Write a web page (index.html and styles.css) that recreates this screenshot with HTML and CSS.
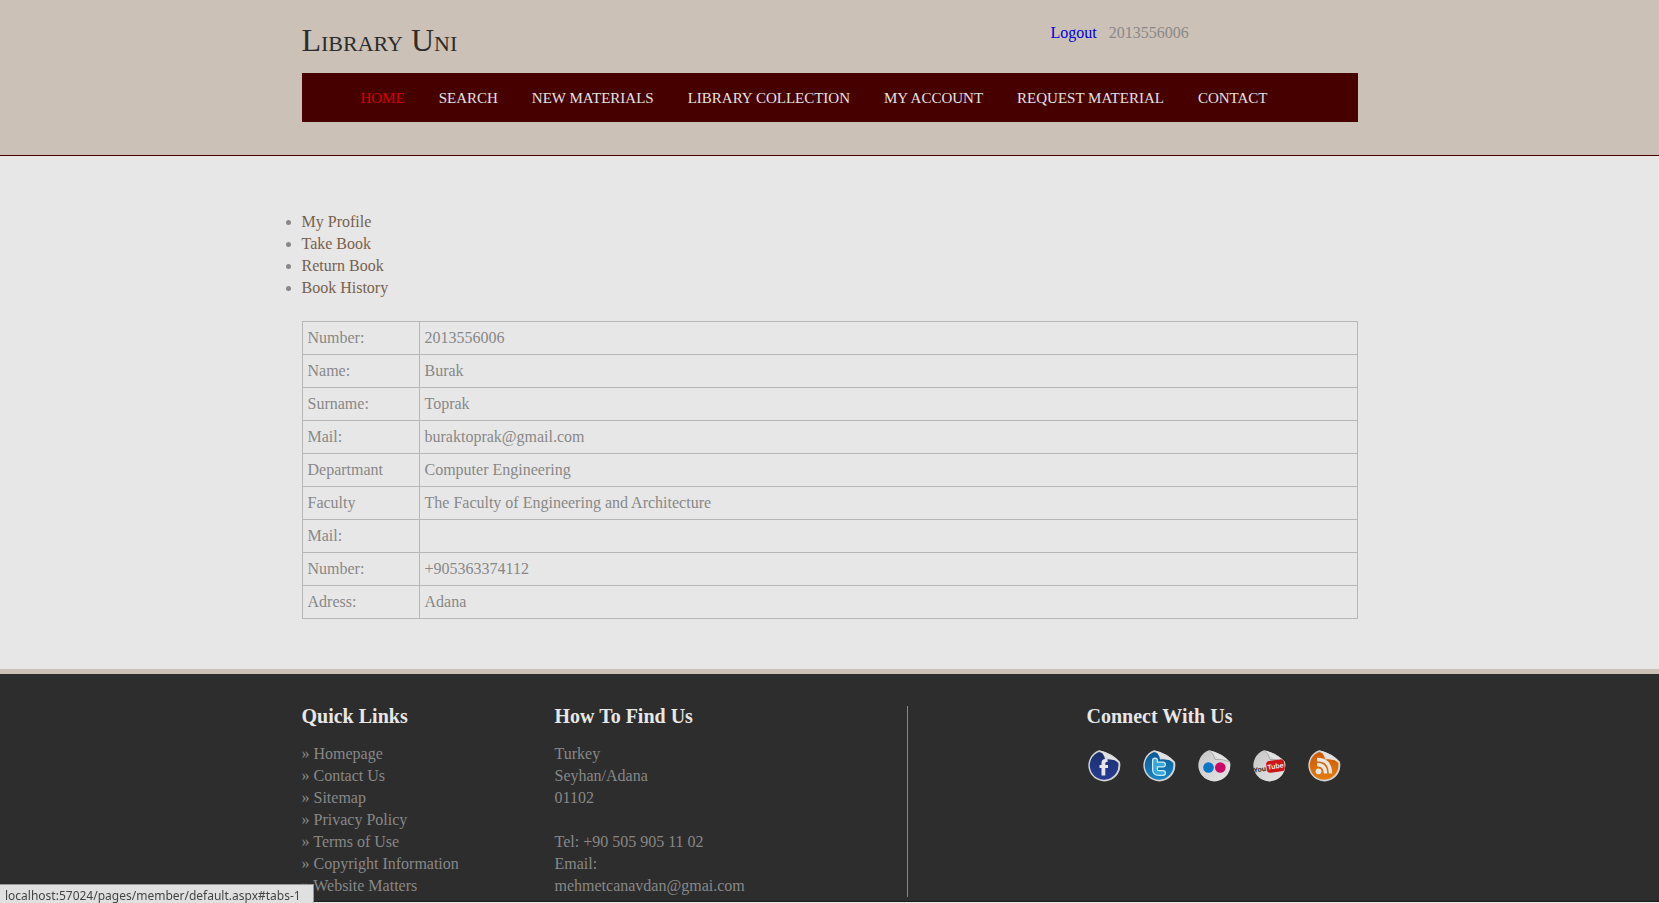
FILE: index.html
```html
<!DOCTYPE html>
<html lang="en">
<head>
<meta charset="utf-8">
<meta name="viewport" content="width=device-width, initial-scale=1">
<title>Library Uni</title>
<link rel="stylesheet" href="styles.css">
</head>
<body>
<header class="site-header">
  <div class="wrap">
    <div class="masthead">
      <h1 class="logo">Library Uni</h1>
      <div class="session"><a href="#logout">Logout</a><span>2013556006</span></div>
    </div>
    <nav class="main-nav">
      <a class="active" href="#home">HOME</a>
      <a href="#search">SEARCH</a>
      <a href="#new">NEW MATERIALS</a>
      <a href="#collection">LIBRARY COLLECTION</a>
      <a href="#account">MY ACCOUNT</a>
      <a href="#request">REQUEST MATERIAL</a>
      <a href="#contact">CONTACT</a>
    </nav>
  </div>
</header>

<main class="wrap content">
  <ul class="tabs">
    <li><a href="#tabs-1">My Profile</a></li>
    <li><a href="#tabs-2">Take Book</a></li>
    <li><a href="#tabs-3">Return Book</a></li>
    <li><a href="#tabs-4">Book History</a></li>
  </ul>
  <table class="profile">
    <tbody>
      <tr><th scope="row">Number:</th><td>2013556006</td></tr>
      <tr><th scope="row">Name:</th><td>Burak</td></tr>
      <tr><th scope="row">Surname:</th><td>Toprak</td></tr>
      <tr><th scope="row">Mail:</th><td>buraktoprak@gmail.com</td></tr>
      <tr><th scope="row">Departmant</th><td>Computer Engineering</td></tr>
      <tr><th scope="row">Faculty</th><td>The Faculty of Engineering and Architecture</td></tr>
      <tr><th scope="row">Mail:</th><td></td></tr>
      <tr><th scope="row">Number:</th><td>+905363374112</td></tr>
      <tr><th scope="row">Adress:</th><td>Adana</td></tr>
    </tbody>
  </table>
</main>

<footer class="site-footer">
  <div class="wrap footer-grid">
    <section>
      <h2>Quick Links</h2>
      <ul class="quick-links">
        <li>» <a href="#home">Homepage</a></li>
        <li>» <a href="#contact">Contact Us</a></li>
        <li>» <a href="#sitemap">Sitemap</a></li>
        <li>» <a href="#privacy">Privacy Policy</a></li>
        <li>» <a href="#terms">Terms of Use</a></li>
        <li>» <a href="#copyright">Copyright Information</a></li>
        <li>» <a href="#matters">Website Matters</a></li>
      </ul>
    </section>
    <section class="find-us">
      <h2>How To Find Us</h2>
      <address>Turkey<br>Seyhan/Adana<br>01102<br><br>Tel: +90 505 905 11 02<br>Email:<br>mehmetcanavdan@gmai.com</address>
    </section>
    <section class="connect">
      <h2>Connect With Us</h2>
      <div class="social">
        <a href="#facebook" aria-label="Facebook"><svg viewBox="0 0 34 34">
          <defs>
            <linearGradient id="peel" x1="0" y1="1" x2="1" y2="0"><stop offset="0" stop-color="#aaa"/><stop offset=".45" stop-color="#e6e6e6"/><stop offset="1" stop-color="#b4b4b4"/></linearGradient>
            <linearGradient id="paper" x1="0" y1="0" x2="1" y2="1"><stop offset="0" stop-color="#c6c6c6"/><stop offset="1" stop-color="#e6e6e6"/></linearGradient>
            <linearGradient id="navy" x1="0" y1="0" x2="0" y2="1"><stop offset="0" stop-color="#1d2f6d"/><stop offset="1" stop-color="#263c94"/></linearGradient>
            <linearGradient id="sky" x1="0" y1="0" x2="0" y2="1"><stop offset="0" stop-color="#0b5791"/><stop offset="1" stop-color="#1687c9"/></linearGradient>
            <linearGradient id="amber" x1="0" y1="0" x2="0" y2="1"><stop offset="0" stop-color="#cf5800"/><stop offset="1" stop-color="#e37c0d"/></linearGradient>
          </defs>
          <path d="M12 1.300A16 16 0 1 0 33 13Q24 4 12 1.300Z" fill="#d2d2d2"/>
          <path d="M12 3A14.300 14.300 0 1 0 31.200 14Q22 5 12 3Z" fill="url(#navy)"/>
          <path d="M12 1.300q5 3 6 9.200 7-1 15 2.500Q25 4 12 1.300Z" fill="url(#peel)"/>
          <path d="M20.500 10h-2q-4 0-4 4v2h-2v3h2v7.500h3.800V19H21v-3h-2.700v-1.500q0-1.500 1-1.500h1.200Z" fill="#e6e6e6"/>
        </svg></a>
        <a href="#twitter" aria-label="Twitter"><svg viewBox="0 0 34 34">
          <path d="M12 1.300A16 16 0 1 0 33 13Q24 4 12 1.300Z" fill="#d2d2d2"/>
          <path d="M12 3A14.300 14.300 0 1 0 31.200 14Q22 5 12 3Z" fill="url(#sky)"/>
          <path d="M12 1.300q5 3 6 9.200 7-1 15 2.500Q25 4 12 1.300Z" fill="url(#peel)"/>
          <path d="M13 11.500v9q0 3.500 4 3.500h4M13 15.500h8" fill="none" stroke="#d5eaf3" stroke-width="6" stroke-linecap="round" stroke-linejoin="round"/>
          <path d="M13 11.500v9q0 3.500 4 3.500h4M13 15.500h8" fill="none" stroke="#35a6d8" stroke-width="3.500" stroke-linecap="round" stroke-linejoin="round"/>
        </svg></a>
        <a href="#flickr" aria-label="Flickr"><svg viewBox="0 0 34 34">
          <path d="M12 1.300A16 16 0 1 0 33 13Q24 4 12 1.300Z" fill="url(#paper)"/>
          <path d="M12 1.300q5 3 6 9.200 7-1 15 2.500Q25 4 12 1.300Z" fill="url(#peel)"/>
          <path d="M12 1.300q5 3 6 9.200 7-1 15 2.500" fill="none" stroke="#999" stroke-width=".7"/>
          <circle cx="11.500" cy="18.500" r="5.300" fill="#0876c9"/><circle cx="23.300" cy="18.500" r="5.300" fill="#cc0866"/>
        </svg></a>
        <a href="#youtube" aria-label="YouTube"><svg viewBox="0 0 34 34">
          <path d="M12 1.300A16 16 0 1 0 33 13Q24 4 12 1.300Z" fill="url(#paper)"/>
          <path d="M12 1.300q5 3 6 9.200 7-1 15 2.500Q25 4 12 1.300Z" fill="url(#peel)"/>
          <path d="M12 1.300q5 3 6 9.200 7-1 15 2.500" fill="none" stroke="#999" stroke-width=".7"/>
          <g transform="rotate(-8 17 18)">
            <rect x="14.500" y="12" width="18" height="12" rx="3.500" fill="#cb1717"/>
            <text class="tube" x="1" y="21.500" fill="#222">You</text><text class="tube" x="15.500" y="20.500" fill="#eee">Tube</text>
          </g>
        </svg></a>
        <a href="#rss" aria-label="RSS"><svg viewBox="0 0 34 34">
          <path d="M12 1.300A16 16 0 1 0 33 13Q24 4 12 1.300Z" fill="#d2d2d2"/>
          <path d="M12 3A14.300 14.300 0 1 0 31.200 14Q22 5 12 3Z" fill="url(#amber)"/>
          <path d="M12 1.300q5 3 6 9.200 7-1 15 2.500Q25 4 12 1.300Z" fill="url(#peel)"/>
          <circle cx="11.500" cy="22.300" r="2.900" fill="#e8e8e8"/>
          <path d="M10 15.500q8.500 0 8.500 9M10 10.500q13.500 0 13.500 14" fill="none" stroke="#e8e8e8" stroke-width="3.300"/>
        </svg></a>
      </div>
    </section>
  </div>
</footer>
<div class="status">localhost:57024/pages/member/default.aspx#tabs-1</div>
</body>
</html>
```
FILE: styles.css
```css
* { box-sizing: border-box; }

body {
  margin: 0;
  background: #e7e7e7;
  color: #888;
  font: 16px/22px Georgia, "Liberation Serif", serif;
}

a { color: inherit; text-decoration: none; }
h1, h2, ul { margin: 0; padding: 0; font-weight: normal; }

.wrap { width: calc(100% - 40px); max-width: 1056px; margin: 0 auto; }

.site-header {
  padding-bottom: 33px;
  background: #ccc1b6;
  border-bottom: 1px solid #470000;
}
.masthead { display: flex; justify-content: space-between; height: 73px; padding-top: 22px; }
.logo { color: #2d2d2d; font-size: 32px; line-height: 36px; font-variant: small-caps; }
.session { display: flex; gap: 12px; width: 307px; }
.session a { color: #0000d4; }

.main-nav {
  display: flex;
  flex-wrap: wrap;
  gap: 0 34px;
  padding: 14px 59px 13px;
  background: #470000;
  color: #e3e3e3;
  font-size: 15px;
}
.main-nav .active { color: #d40000; }

.content { padding: 55px 0 50px; }
.tabs { margin-bottom: 22px; color: #888; }
.tabs a { color: #77614c; }

.profile { width: 100%; border-collapse: collapse; }
.profile th, .profile td {
  height: 33px;
  padding: 5px;
  border: 1px solid #b7b7b7;
  font-weight: normal;
  text-align: left;
}
.profile th { width: 117px; }

.site-footer {
  padding: 32px 0 4px;
  background: #2d2d2d;
  border-top: 5px solid #ccc1b6;
  border-bottom: 1px solid #1b1b1b;
}
.footer-grid { display: grid; grid-template-columns: 253px 353px 1fr; }
.footer-grid h2 { margin-bottom: 17px; color: #e7e7e7; font-size: 20px; font-weight: bold; line-height: 20px; }
.quick-links { list-style: none; }
.find-us { border-right: 1px solid #888; }
.find-us address { font-style: normal; }
.connect { padding-left: 179px; }
.social { display: flex; gap: 21px; padding-top: 6px; }
.social a, .social svg { display: block; width: 34px; height: 34px; }
.tube { font: bold 7px "Liberation Sans", sans-serif; }

.status {
  position: fixed;
  left: 0;
  bottom: 0;
  height: 19px;
  padding: 2px 12px 0 5px;
  background: #e0e0e0;
  border-top: 1px solid #999;
  border-right: 1px solid #999;
  color: #444;
  font: 12px/18px "Noto Sans", sans-serif;
}
```
